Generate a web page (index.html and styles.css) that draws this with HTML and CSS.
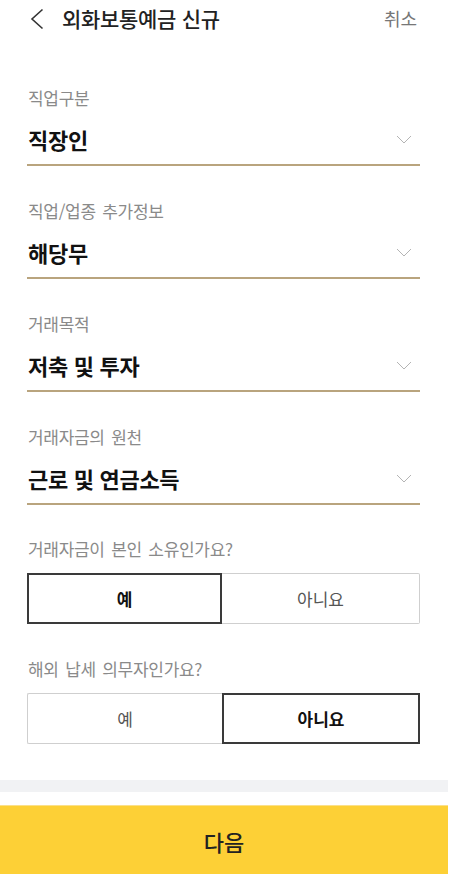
FILE: index.html
```html
<!DOCTYPE html>
<html lang="ko">
<head>
  <meta charset="UTF-8" />
  <title>외화보통예금 신규</title>
  <meta name="viewport" content="width=device-width, initial-scale=1.0" />
  <link rel="stylesheet" href="styles.css">
</head>
<body>
  <div class="page">
    <div class="header">
      <svg class="back" width="14" height="22" viewBox="0 0 14 22">
        <polyline points="12.5,1.5 2,11 12.5,20.5" fill="none" stroke="#333" stroke-width="1.6" />
      </svg>
      <h1 class="title">외화보통예금 신규</h1>
      <span class="cancel">취소</span>
    </div>

    <div class="form">
      <div class="field">
        <div class="label">직업구분</div>
        <div class="select">
          <span class="value">직장인</span>
          <svg class="arrow" width="16" height="9" viewBox="0 0 16 9"><polyline points="1,1 8,8 15,1" fill="none" stroke="#b4b4b4" stroke-width="1" /></svg>
        </div>
      </div>

      <div class="field">
        <div class="label">직업/업종 추가정보</div>
        <div class="select">
          <span class="value">해당무</span>
          <svg class="arrow" width="16" height="9" viewBox="0 0 16 9"><polyline points="1,1 8,8 15,1" fill="none" stroke="#b4b4b4" stroke-width="1" /></svg>
        </div>
      </div>

      <div class="field">
        <div class="label">거래목적</div>
        <div class="select">
          <span class="value">저축 및 투자</span>
          <svg class="arrow" width="16" height="9" viewBox="0 0 16 9"><polyline points="1,1 8,8 15,1" fill="none" stroke="#b4b4b4" stroke-width="1" /></svg>
        </div>
      </div>

      <div class="field">
        <div class="label">거래자금의 원천</div>
        <div class="select">
          <span class="value">근로 및 연금소득</span>
          <svg class="arrow" width="16" height="9" viewBox="0 0 16 9"><polyline points="1,1 8,8 15,1" fill="none" stroke="#b4b4b4" stroke-width="1" /></svg>
        </div>
      </div>

      <div class="question">
        <div class="label">거래자금이 본인 소유인가요?</div>
        <div class="toggle">
          <button class="opt on">예</button>
          <button class="opt no-left">아니요</button>
        </div>
      </div>

      <div class="question">
        <div class="label">해외 납세 의무자인가요?</div>
        <div class="toggle">
          <button class="opt no-right">예</button>
          <button class="opt on">아니요</button>
        </div>
      </div>
    </div>

    <div class="divider"></div>

    <button class="next">다음</button>
  </div>
</body>
</html>
```

FILE: styles.css
```css
body {
  margin: 0;
  background-color: #fff;
  font-family: "Noto Sans CJK KR", "Noto Sans", sans-serif;
  color: #222;
}

.page {
  width: 448px;
  height: 874px;
  overflow: hidden;
}

.header {
  display: flex;
  align-items: center;
  height: 36px;
  padding: 0 31px 0 30px;
}

.back {
  flex: none;
  margin-top: 1px;
}

.title {
  flex: 1;
  margin: 0 0 0 18px;
  font-size: 21px;
  font-weight: 500;
  color: #222;
  letter-spacing: -0.3px;
}

.cancel {
  font-size: 18px;
  color: #777;
}

.form {
  padding: 0 28px 0 27px;
}

.field {
  margin-top: 33px;
}

.field:first-child {
  margin-top: 50px;
}

.label {
  height: 24px;
  line-height: 24px;
  font-size: 17px;
  color: #8a8a8a;
  padding-left: 1px;
  letter-spacing: -0.3px;
  word-spacing: 2px;
}

.select {
  display: flex;
  align-items: center;
  justify-content: space-between;
  height: 40px;
  margin-top: 9px;
  padding: 0 8px 5px 1px;
  border-bottom: 2px solid #b9a47e;
}

.value {
  font-size: 22px;
  font-weight: 700;
  color: #111;
  line-height: 40px;
  letter-spacing: -0.3px;
}

.question {
  margin-top: 32px;
}

.question + .question {
  margin-top: 33px;
}

.toggle {
  display: grid;
  grid-template-columns: 195px 1fr;
  margin-top: 12px;
}

.opt {
  height: 51px;
  margin: 0;
  padding: 0;
  background: #fff;
  border: 1px solid #cfcfcf;
  font-family: inherit;
  font-size: 17px;
  color: #555;
  cursor: pointer;
}

.opt.on {
  border: 2px solid #3a3a3a;
  font-weight: 700;
  color: #111;
}

.opt.no-left {
  border-left: none;
  border-radius: 0 2px 2px 0;
}

.opt.no-right {
  border-right: none;
  border-radius: 2px 0 0 2px;
}

.divider {
  height: 12px;
  margin-top: 36px;
  background-color: #f1f2f4;
}

.next {
  display: block;
  width: 100%;
  height: 70px;
  margin-top: 13px;
  border: none;
  border-top: 1px solid #fbe08a;
  background-color: #fdd036;
  font-family: inherit;
  font-size: 22px;
  font-weight: 500;
  color: #222;
}
```
